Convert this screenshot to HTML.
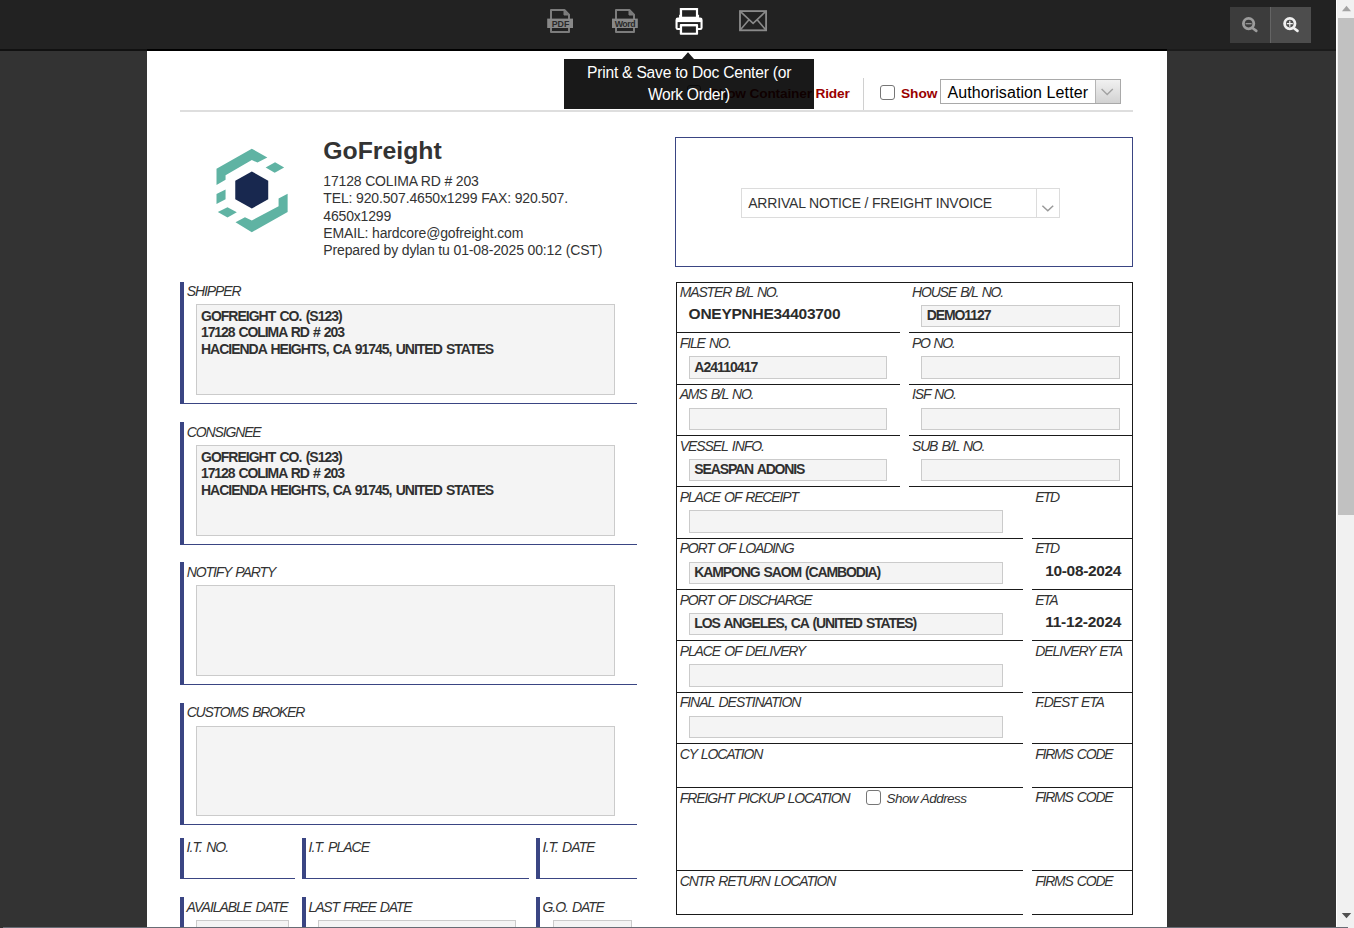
<!DOCTYPE html>
<html lang="en"><head><meta charset="utf-8"><title>Arrival Notice / Freight Invoice</title>
<style>
html,body{margin:0;padding:0;}
body{width:1354px;height:928px;overflow:hidden;background:#333;position:relative;font-family:"Liberation Sans",sans-serif;}
.r{position:absolute;box-sizing:content-box;}
.t{position:absolute;white-space:nowrap;}
.in{background:#f4f4f4;border:1px solid #cbcbcb;}
svg{position:absolute;overflow:visible;}
</style></head><body>

<div class="r" style="left:147px;top:51px;width:1020px;height:877px;background:#fff;"></div>
<div class="r" style="left:0px;top:0px;width:1336px;height:49px;background:#222;"></div>
<div class="r" style="left:0px;top:49px;width:147px;height:2px;background:#111;"></div>
<div class="r" style="left:147px;top:49px;width:1020px;height:2px;background:#000;"></div>
<div class="r" style="left:1167px;top:49px;width:169px;height:2px;background:#1b1b1b;"></div>
<div class="r" style="left:1336px;top:0px;width:1px;height:928px;background:#fff;"></div>
<div class="r" style="left:1337px;top:0px;width:17px;height:928px;background:#f1f1f1;"></div>
<div class="r" style="left:1338px;top:18px;width:16px;height:497px;background:#c1c1c1;"></div>
<svg style="left:1337px;top:0" width="17" height="928"><polygon points="5,11.3 14,11.3 9.5,5.8" fill="#a3a3a3"/><polygon points="4.800,913 14.200,913 9.500,918.300" fill="#505050"/></svg>
<div class="r" style="left:1230px;top:7px;width:40px;height:36px;background:#3c3c3c;"></div>
<div class="r" style="left:1270px;top:7px;width:1px;height:36px;background:#646464;"></div>
<div class="r" style="left:1271px;top:7px;width:40px;height:36px;background:#4d4d4d;"></div>
<svg style="left:1230px;top:7px" width="81" height="36">
<g fill="none" stroke="#9c9c9c" stroke-width="2.8"><circle cx="18.6" cy="16.6" r="5.2"/><path d="M22.8 21.2 L26.300 23.900" stroke-linecap="round" stroke-width="2.600"/><path d="M15.600 16.700h6" stroke-width="1.200"/></g>
<g fill="none" stroke="#f0f0f0" stroke-width="2.8"><circle cx="59.8" cy="16.6" r="5.2"/><path d="M64 21.2 L67.500 23.900" stroke-linecap="round" stroke-width="2.600"/><path d="M56.800 16.700h6M59.800 13.700v6" stroke-width="1.200"/></g>
</svg>
<svg style="left:540px;top:0" width="240" height="49">
<!-- PDF -->
<g fill="none" stroke="#7c7c7c" stroke-width="2" stroke-linejoin="round">
<path d="M11 10h13.400l4.600 4.600v17.500h-18z"/>
<path d="M24 10.500v4.500h4.500z" fill="#7c7c7c" stroke-width="1"/>
</g>
<rect x="7.200" y="18.600" width="25.800" height="9.400" fill="#888"/>
<text x="20.500" y="26.600" font-family="Liberation Sans, sans-serif" font-size="8.800" font-weight="bold" fill="#2a2a2a" text-anchor="middle">PDF</text>
<!-- Word -->
<g fill="none" stroke="#7c7c7c" stroke-width="2" stroke-linejoin="round">
<path d="M76 10h13.400l4.600 4.600v17.500h-18z"/>
<path d="M89 10.500v4.500h4.500z" fill="#7c7c7c" stroke-width="1"/>
</g>
<rect x="72" y="18.600" width="25.800" height="9.400" fill="#888"/>
<text x="84.900" y="26.500" font-family="Liberation Sans, sans-serif" font-size="8.800" font-weight="bold" fill="#2a2a2a" text-anchor="middle" letter-spacing="-0.45">Word</text>
<!-- printer -->
<rect x="135.500" y="17.600" width="27.100" height="12.500" rx="2.400" fill="#fff"/>
<rect x="137.600" y="22.100" width="22.900" height="5.900" fill="#222"/>
<rect x="139.100" y="14.800" width="20" height="3.500" fill="#fff"/>
<rect x="139.800" y="7.900" width="18.300" height="10" rx="0.600" fill="#fff"/>
<rect x="142.100" y="10.200" width="13.800" height="6.500" fill="#222"/>
<rect x="139.800" y="24.100" width="18.300" height="10.700" rx="0.800" fill="#fff"/>
<rect x="142.100" y="26.400" width="13.800" height="6.300" fill="#222"/>
<!-- mail -->
<g fill="none" stroke="#8a8a8a" stroke-width="1.850">
<rect x="200" y="11.100" width="26.100" height="19.200"/>
<path d="M200 11.100l13.100 12.200l13-12.200M200 30.300l9.200-10.800M226.100 30.300l-9.200-10.800" stroke-width="1.600"/>
</g>
</svg>
<div class="r" style="left:687px;top:85.2px;width:12.400px;height:12.400px;border:1.200px solid #767676;border-radius:3px;background:#fff"></div>
<span class="t" style="left:710.04px;top:86.65px;font-size:13.7px;line-height:13.7px;font-weight:bold;letter-spacing:-0.170px;color:#9a0000;">Show Container Rider</span>
<div class="r" style="left:863px;top:78px;width:1px;height:32px;background:#d0d0d0;"></div>
<div class="r" style="left:880.2px;top:85.2px;width:12.400px;height:12.400px;border:1.200px solid #767676;border-radius:3px;background:#fff"></div>
<span class="t" style="left:901.00px;top:86.65px;font-size:13.7px;line-height:13.7px;font-weight:bold;letter-spacing:-0.044px;color:#9a0000;">Show</span>
<div class="r" style="left:940px;top:79px;width:179px;height:23px;border:1px solid #a9a9a9;background:#fff"></div>
<div class="r" style="left:1095px;top:80px;width:24px;height:23px;border-left:1px solid #b5b5b5;background:linear-gradient(#f1f1f1,#d2d2d2)"></div>
<svg style="left:1096px;top:80px" width="24" height="23"><path d="M5.600 9l5.600 5.500l5.600-5.500" fill="none" stroke="#a2a2a2" stroke-width="1.400"/></svg>
<span class="t" style="left:947.50px;top:84.70px;font-size:16px;line-height:16px;letter-spacing:0.092px;color:#000;">Authorisation Letter</span>
<div class="r" style="left:180px;top:110px;width:953px;height:2px;background:#dedede;"></div>
<svg style="left:682px;top:52px" width="12" height="7"><polygon points="0,7 6,0.300 12,7" fill="#1b1b1b"/></svg>
<div class="r" style="left:564px;top:59px;width:250px;height:50px;background:rgba(0,0,0,0.9);"></div>
<span class="t" style="left:587.00px;top:65.30px;font-size:15.6px;line-height:15.6px;letter-spacing:-0.213px;color:#fff;">Print &amp; Save to Doc Center (or</span>
<span class="t" style="left:648.00px;top:86.90px;font-size:15.6px;line-height:15.6px;letter-spacing:-0.322px;color:#fff;">Work Order)</span>
<svg style="left:0;top:0" width="1354" height="928">
<polygon fill="#5fb3a3" points="216.51,168.79 251.81,148.75 267.33,157.54 257.50,162.59 251.81,160.00 225.56,175.26 225.56,179.78 216.51,184.96"/>
<polygon fill="#5fb3a3" points="265.65,167.50 275.09,162.33 284.14,167.50 274.70,172.67"/>
<polygon fill="#5fb3a3" points="216.51,194.01 225.56,189.48 225.56,199.18 216.51,203.97"/>
<polygon fill="#5fb3a3" points="217.80,212.11 227.50,207.20 236.81,212.37 227.50,217.54"/>
<polygon fill="#5fb3a3" points="235.52,222.20 244.96,217.28 251.81,220.52 278.58,206.29 278.58,198.53 287.63,193.75 287.63,212.11 251.81,232.16"/>
<polygon fill="#18284f" points="251.81,171.38 268.23,180.82 268.23,199.18 251.81,208.62 235.26,199.18 235.26,180.82"/>
</svg>
<span class="t" style="left:323.30px;top:139.40px;font-size:24.8px;line-height:24.8px;font-weight:bold;letter-spacing:-0.010px;color:#333;">GoFreight</span>
<span class="t" style="left:323.30px;top:173.60px;font-size:14px;line-height:14px;letter-spacing:-0.159px;color:#333;">17128 COLIMA RD # 203</span>
<span class="t" style="left:323.30px;top:190.80px;font-size:14px;line-height:14px;letter-spacing:-0.143px;color:#333;">TEL: 920.507.4650x1299 FAX: 920.507.</span>
<span class="t" style="left:323.30px;top:208.60px;font-size:14px;line-height:14px;letter-spacing:-0.173px;color:#333;">4650x1299</span>
<span class="t" style="left:323.30px;top:225.80px;font-size:14px;line-height:14px;letter-spacing:-0.146px;color:#333;">EMAIL: hardcore@gofreight.com</span>
<span class="t" style="left:323.30px;top:243.40px;font-size:14px;line-height:14px;letter-spacing:-0.136px;color:#333;">Prepared by dylan tu 01-08-2025 00:12 (CST)</span>
<div class="r" style="left:180px;top:282px;width:4px;height:122px;background:#3a4583;"></div>
<div class="r" style="left:184px;top:403px;width:453px;height:1px;background:#3a4583;"></div>
<span class="t" style="left:186.70px;top:284.20px;font-size:14px;line-height:14px;font-style:italic;letter-spacing:-1.096px;word-spacing:1.5px;color:#333;">SHIPPER</span>
<div class="r in" style="left:196px;top:304px;width:417px;height:89px"></div>
<span class="t" style="left:201.00px;top:308.90px;font-size:14px;line-height:14px;font-weight:bold;letter-spacing:-1.003px;word-spacing:1.4px;color:#303030;">GOFREIGHT CO. (S123)</span>
<span class="t" style="left:201.00px;top:325.25px;font-size:14px;line-height:14px;font-weight:bold;letter-spacing:-1.107px;word-spacing:1.4px;color:#303030;">17128 COLIMA RD # 203</span>
<span class="t" style="left:201.00px;top:341.60px;font-size:14px;line-height:14px;font-weight:bold;letter-spacing:-1.016px;word-spacing:1.4px;color:#303030;">HACIENDA HEIGHTS, CA 91745, UNITED STATES</span>
<div class="r" style="left:180px;top:422px;width:4px;height:123px;background:#3a4583;"></div>
<div class="r" style="left:184px;top:544px;width:453px;height:1px;background:#3a4583;"></div>
<span class="t" style="left:186.70px;top:424.90px;font-size:14px;line-height:14px;font-style:italic;letter-spacing:-1.124px;word-spacing:1.5px;color:#333;">CONSIGNEE</span>
<div class="r in" style="left:196px;top:445px;width:417px;height:89px"></div>
<span class="t" style="left:201.00px;top:449.90px;font-size:14px;line-height:14px;font-weight:bold;letter-spacing:-1.003px;word-spacing:1.4px;color:#303030;">GOFREIGHT CO. (S123)</span>
<span class="t" style="left:201.00px;top:466.25px;font-size:14px;line-height:14px;font-weight:bold;letter-spacing:-1.107px;word-spacing:1.4px;color:#303030;">17128 COLIMA RD # 203</span>
<span class="t" style="left:201.00px;top:482.60px;font-size:14px;line-height:14px;font-weight:bold;letter-spacing:-1.016px;word-spacing:1.4px;color:#303030;">HACIENDA HEIGHTS, CA 91745, UNITED STATES</span>
<div class="r" style="left:180px;top:562px;width:4px;height:123px;background:#3a4583;"></div>
<div class="r" style="left:184px;top:684px;width:453px;height:1px;background:#3a4583;"></div>
<span class="t" style="left:186.70px;top:564.90px;font-size:14px;line-height:14px;font-style:italic;letter-spacing:-1.113px;word-spacing:1.5px;color:#333;">NOTIFY PARTY</span>
<div class="r in" style="left:196px;top:585px;width:417px;height:89px"></div>
<div class="r" style="left:180px;top:703px;width:4px;height:122px;background:#3a4583;"></div>
<div class="r" style="left:184px;top:824px;width:453px;height:1px;background:#3a4583;"></div>
<span class="t" style="left:186.70px;top:705.00px;font-size:14px;line-height:14px;font-style:italic;letter-spacing:-1.208px;word-spacing:1.5px;color:#333;">CUSTOMS BROKER</span>
<div class="r in" style="left:196px;top:726px;width:417px;height:88px"></div>
<div class="r" style="left:180px;top:838px;width:4px;height:40.6px;background:#3a4583;"></div>
<div class="r" style="left:184px;top:877.6px;width:111px;height:1px;background:#3a4583;"></div>
<span class="t" style="left:186.60px;top:840.00px;font-size:14px;line-height:14px;font-style:italic;letter-spacing:-0.944px;word-spacing:1.5px;color:#333;">I.T. NO.</span>
<div class="r" style="left:302px;top:838px;width:4px;height:40.6px;background:#3a4583;"></div>
<div class="r" style="left:306px;top:877.6px;width:223px;height:1px;background:#3a4583;"></div>
<span class="t" style="left:308.60px;top:840.00px;font-size:14px;line-height:14px;font-style:italic;letter-spacing:-0.984px;word-spacing:1.5px;color:#333;">I.T. PLACE</span>
<div class="r" style="left:536px;top:838px;width:4px;height:40.6px;background:#3a4583;"></div>
<div class="r" style="left:540px;top:877.6px;width:97px;height:1px;background:#3a4583;"></div>
<span class="t" style="left:542.60px;top:840.00px;font-size:14px;line-height:14px;font-style:italic;letter-spacing:-0.978px;word-spacing:1.5px;color:#333;">I.T. DATE</span>
<div class="r" style="left:180px;top:897px;width:4px;height:40px;background:#3a4583;"></div>
<span class="t" style="left:186.60px;top:899.60px;font-size:14px;line-height:14px;font-style:italic;letter-spacing:-1.055px;word-spacing:1.5px;color:#333;">AVAILABLE DATE</span>
<div class="r in" style="left:196px;top:920px;width:91px;height:20px"></div>
<div class="r" style="left:302px;top:897px;width:4px;height:40px;background:#3a4583;"></div>
<span class="t" style="left:308.60px;top:899.60px;font-size:14px;line-height:14px;font-style:italic;letter-spacing:-1.189px;word-spacing:1.5px;color:#333;">LAST FREE DATE</span>
<div class="r in" style="left:318px;top:920px;width:196px;height:20px"></div>
<div class="r" style="left:536px;top:897px;width:4px;height:40px;background:#3a4583;"></div>
<span class="t" style="left:542.60px;top:899.60px;font-size:14px;line-height:14px;font-style:italic;letter-spacing:-1.120px;word-spacing:1.5px;color:#333;">G.O. DATE</span>
<div class="r in" style="left:553px;top:920px;width:77px;height:20px"></div>
<div class="r" style="left:675px;top:137px;width:456px;height:128px;border:1px solid #3a4583"></div>
<div class="r" style="left:741px;top:188px;width:317px;height:28px;border:1px solid #dcdcdc;background:#fff"></div>
<div class="r" style="left:1036px;top:189px;width:1px;height:28px;background:#dcdcdc;"></div>
<svg style="left:1037px;top:189px" width="22" height="28"><path d="M5.400 16.800l5.400 5l5.400-5" fill="none" stroke="#999" stroke-width="1.500"/></svg>
<span class="t" style="left:748.20px;top:195.60px;font-size:14px;line-height:14px;letter-spacing:-0.176px;color:#333;">ARRIVAL NOTICE / FREIGHT INVOICE</span>
<div class="r" style="left:676px;top:282px;width:1px;height:633px;background:#1a1a1a;"></div>
<div class="r" style="left:1132px;top:282px;width:1px;height:633px;background:#1a1a1a;"></div>
<div class="r" style="left:676px;top:282px;width:457px;height:1px;background:#1a1a1a;"></div>
<div class="r" style="left:676px;top:332px;width:224px;height:1px;background:#1a1a1a;"></div>
<div class="r" style="left:909px;top:332px;width:224px;height:1px;background:#1a1a1a;"></div>
<span class="t" style="left:679.70px;top:285.30px;font-size:14px;line-height:14px;font-style:italic;letter-spacing:-1.151px;word-spacing:1.5px;color:#333;">MASTER B/L NO.</span>
<span class="t" style="left:912.00px;top:285.30px;font-size:14px;line-height:14px;font-style:italic;letter-spacing:-1.170px;word-spacing:1.5px;color:#333;">HOUSE B/L NO.</span>
<div class="r in" style="left:921px;top:305px;width:197px;height:20px"></div>
<div class="r" style="left:676px;top:384px;width:224px;height:1px;background:#1a1a1a;"></div>
<div class="r" style="left:909px;top:384px;width:224px;height:1px;background:#1a1a1a;"></div>
<span class="t" style="left:679.70px;top:336.00px;font-size:14px;line-height:14px;font-style:italic;letter-spacing:-1.106px;word-spacing:1.5px;color:#333;">FILE NO.</span>
<span class="t" style="left:912.00px;top:336.00px;font-size:14px;line-height:14px;font-style:italic;letter-spacing:-1.349px;word-spacing:1.5px;color:#333;">PO NO.</span>
<div class="r in" style="left:689px;top:356px;width:196px;height:21px"></div>
<div class="r in" style="left:921px;top:356px;width:197px;height:21px"></div>
<div class="r" style="left:676px;top:435px;width:224px;height:1px;background:#1a1a1a;"></div>
<div class="r" style="left:909px;top:435px;width:224px;height:1px;background:#1a1a1a;"></div>
<span class="t" style="left:679.70px;top:387.00px;font-size:14px;line-height:14px;font-style:italic;letter-spacing:-1.196px;word-spacing:1.5px;color:#333;">AMS B/L NO.</span>
<span class="t" style="left:912.00px;top:387.00px;font-size:14px;line-height:14px;font-style:italic;letter-spacing:-1.147px;word-spacing:1.5px;color:#333;">ISF NO.</span>
<div class="r in" style="left:689px;top:408px;width:196px;height:20px"></div>
<div class="r in" style="left:921px;top:408px;width:197px;height:20px"></div>
<div class="r" style="left:676px;top:486px;width:224px;height:1px;background:#1a1a1a;"></div>
<div class="r" style="left:909px;top:486px;width:224px;height:1px;background:#1a1a1a;"></div>
<span class="t" style="left:679.70px;top:439.00px;font-size:14px;line-height:14px;font-style:italic;letter-spacing:-1.065px;word-spacing:1.5px;color:#333;">VESSEL INFO.</span>
<span class="t" style="left:912.00px;top:439.00px;font-size:14px;line-height:14px;font-style:italic;letter-spacing:-1.180px;word-spacing:1.5px;color:#333;">SUB B/L NO.</span>
<div class="r in" style="left:689px;top:459px;width:196px;height:20px"></div>
<div class="r in" style="left:921px;top:459px;width:197px;height:20px"></div>
<span class="t" style="left:688.60px;top:305.75px;font-size:15.5px;line-height:15.5px;font-weight:bold;letter-spacing:-0.264px;color:#2b2b2b;">ONEYPNHE34403700</span>
<span class="t" style="left:926.80px;top:308.00px;font-size:14px;line-height:14px;font-weight:bold;letter-spacing:-1.106px;word-spacing:1.4px;color:#303030;">DEMO1127</span>
<span class="t" style="left:694.30px;top:359.70px;font-size:14px;line-height:14px;font-weight:bold;letter-spacing:-0.958px;word-spacing:1.4px;color:#303030;">A24110417</span>
<span class="t" style="left:694.30px;top:462.20px;font-size:14px;line-height:14px;font-weight:bold;letter-spacing:-1.132px;word-spacing:1.4px;color:#303030;">SEASPAN ADONIS</span>
<div class="r" style="left:676px;top:538px;width:347px;height:1px;background:#1a1a1a;"></div>
<div class="r" style="left:1032px;top:538px;width:101px;height:1px;background:#1a1a1a;"></div>
<span class="t" style="left:679.70px;top:490.00px;font-size:14px;line-height:14px;font-style:italic;letter-spacing:-1.153px;word-spacing:1.5px;color:#333;">PLACE OF RECEIPT</span>
<span class="t" style="left:1035.20px;top:490.00px;font-size:14px;line-height:14px;font-style:italic;letter-spacing:-1.498px;word-spacing:1.5px;color:#333;">ETD</span>
<div class="r in" style="left:689px;top:510px;width:312px;height:21px"></div>
<div class="r" style="left:676px;top:589px;width:347px;height:1px;background:#1a1a1a;"></div>
<div class="r" style="left:1032px;top:589px;width:101px;height:1px;background:#1a1a1a;"></div>
<span class="t" style="left:679.70px;top:541.00px;font-size:14px;line-height:14px;font-style:italic;letter-spacing:-1.197px;word-spacing:1.5px;color:#333;">PORT OF LOADING</span>
<span class="t" style="left:1035.20px;top:541.00px;font-size:14px;line-height:14px;font-style:italic;letter-spacing:-1.498px;word-spacing:1.5px;color:#333;">ETD</span>
<div class="r in" style="left:689px;top:562px;width:312px;height:20px"></div>
<div class="r" style="left:676px;top:640px;width:347px;height:1px;background:#1a1a1a;"></div>
<div class="r" style="left:1032px;top:640px;width:101px;height:1px;background:#1a1a1a;"></div>
<span class="t" style="left:679.70px;top:593.00px;font-size:14px;line-height:14px;font-style:italic;letter-spacing:-1.183px;word-spacing:1.5px;color:#333;">PORT OF DISCHARGE</span>
<span class="t" style="left:1035.20px;top:593.00px;font-size:14px;line-height:14px;font-style:italic;letter-spacing:-1.401px;word-spacing:1.5px;color:#333;">ETA</span>
<div class="r in" style="left:689px;top:613px;width:312px;height:20px"></div>
<div class="r" style="left:676px;top:692px;width:347px;height:1px;background:#1a1a1a;"></div>
<div class="r" style="left:1032px;top:692px;width:101px;height:1px;background:#1a1a1a;"></div>
<span class="t" style="left:679.70px;top:644.00px;font-size:14px;line-height:14px;font-style:italic;letter-spacing:-1.134px;word-spacing:1.5px;color:#333;">PLACE OF DELIVERY</span>
<span class="t" style="left:1035.20px;top:644.00px;font-size:14px;line-height:14px;font-style:italic;letter-spacing:-1.095px;word-spacing:1.5px;color:#333;">DELIVERY ETA</span>
<div class="r in" style="left:689px;top:664px;width:312px;height:21px"></div>
<div class="r" style="left:676px;top:743px;width:347px;height:1px;background:#1a1a1a;"></div>
<div class="r" style="left:1032px;top:743px;width:101px;height:1px;background:#1a1a1a;"></div>
<span class="t" style="left:679.70px;top:695.00px;font-size:14px;line-height:14px;font-style:italic;letter-spacing:-1.006px;word-spacing:1.5px;color:#333;">FINAL DESTINATION</span>
<span class="t" style="left:1035.20px;top:695.00px;font-size:14px;line-height:14px;font-style:italic;letter-spacing:-1.095px;word-spacing:1.5px;color:#333;">F.DEST ETA</span>
<div class="r in" style="left:689px;top:716px;width:312px;height:20px"></div>
<div class="r" style="left:676px;top:787px;width:347px;height:1px;background:#1a1a1a;"></div>
<div class="r" style="left:1032px;top:787px;width:101px;height:1px;background:#1a1a1a;"></div>
<span class="t" style="left:679.70px;top:747.00px;font-size:14px;line-height:14px;font-style:italic;letter-spacing:-1.152px;word-spacing:1.5px;color:#333;">CY LOCATION</span>
<span class="t" style="left:1035.20px;top:747.00px;font-size:14px;line-height:14px;font-style:italic;letter-spacing:-1.212px;word-spacing:1.5px;color:#333;">FIRMS CODE</span>
<div class="r" style="left:676px;top:870px;width:347px;height:1px;background:#1a1a1a;"></div>
<div class="r" style="left:1032px;top:870px;width:101px;height:1px;background:#1a1a1a;"></div>
<span class="t" style="left:679.70px;top:791.00px;font-size:14px;line-height:14px;font-style:italic;letter-spacing:-1.067px;word-spacing:1.5px;color:#333;">FREIGHT PICKUP LOCATION</span>
<span class="t" style="left:1035.20px;top:790.00px;font-size:14px;line-height:14px;font-style:italic;letter-spacing:-1.212px;word-spacing:1.5px;color:#333;">FIRMS CODE</span>
<div class="r" style="left:676px;top:914px;width:347px;height:1px;background:#1a1a1a;"></div>
<div class="r" style="left:1032px;top:914px;width:101px;height:1px;background:#1a1a1a;"></div>
<span class="t" style="left:679.70px;top:874.00px;font-size:14px;line-height:14px;font-style:italic;letter-spacing:-1.146px;word-spacing:1.5px;color:#333;">CNTR RETURN LOCATION</span>
<span class="t" style="left:1035.20px;top:874.00px;font-size:14px;line-height:14px;font-style:italic;letter-spacing:-1.212px;word-spacing:1.5px;color:#333;">FIRMS CODE</span>
<span class="t" style="left:694.30px;top:565.00px;font-size:14px;line-height:14px;font-weight:bold;letter-spacing:-1.145px;word-spacing:1.4px;color:#303030;">KAMPONG SAOM (CAMBODIA)</span>
<span class="t" style="left:694.30px;top:616.20px;font-size:14px;line-height:14px;font-weight:bold;letter-spacing:-1.077px;word-spacing:1.4px;color:#303030;">LOS ANGELES, CA (UNITED STATES)</span>
<span class="t" style="left:1045.20px;top:562.75px;font-size:15.5px;line-height:15.5px;font-weight:bold;letter-spacing:-0.332px;color:#2b2b2b;">10-08-2024</span>
<span class="t" style="left:1045.20px;top:613.75px;font-size:15.5px;line-height:15.5px;font-weight:bold;letter-spacing:-0.237px;color:#2b2b2b;">11-12-2024</span>
<div class="r" style="left:866.2px;top:790.2px;width:12.400px;height:12.400px;border:1.200px solid #767676;border-radius:3px;background:#fff"></div>
<span class="t" style="left:886.50px;top:791.75px;font-size:13.5px;line-height:13.5px;font-style:italic;letter-spacing:-0.549px;color:#333;">Show Address</span>
<div class="r" style="left:3px;top:927px;width:1345px;height:1px;background:#686c75;"></div>
</body></html>
